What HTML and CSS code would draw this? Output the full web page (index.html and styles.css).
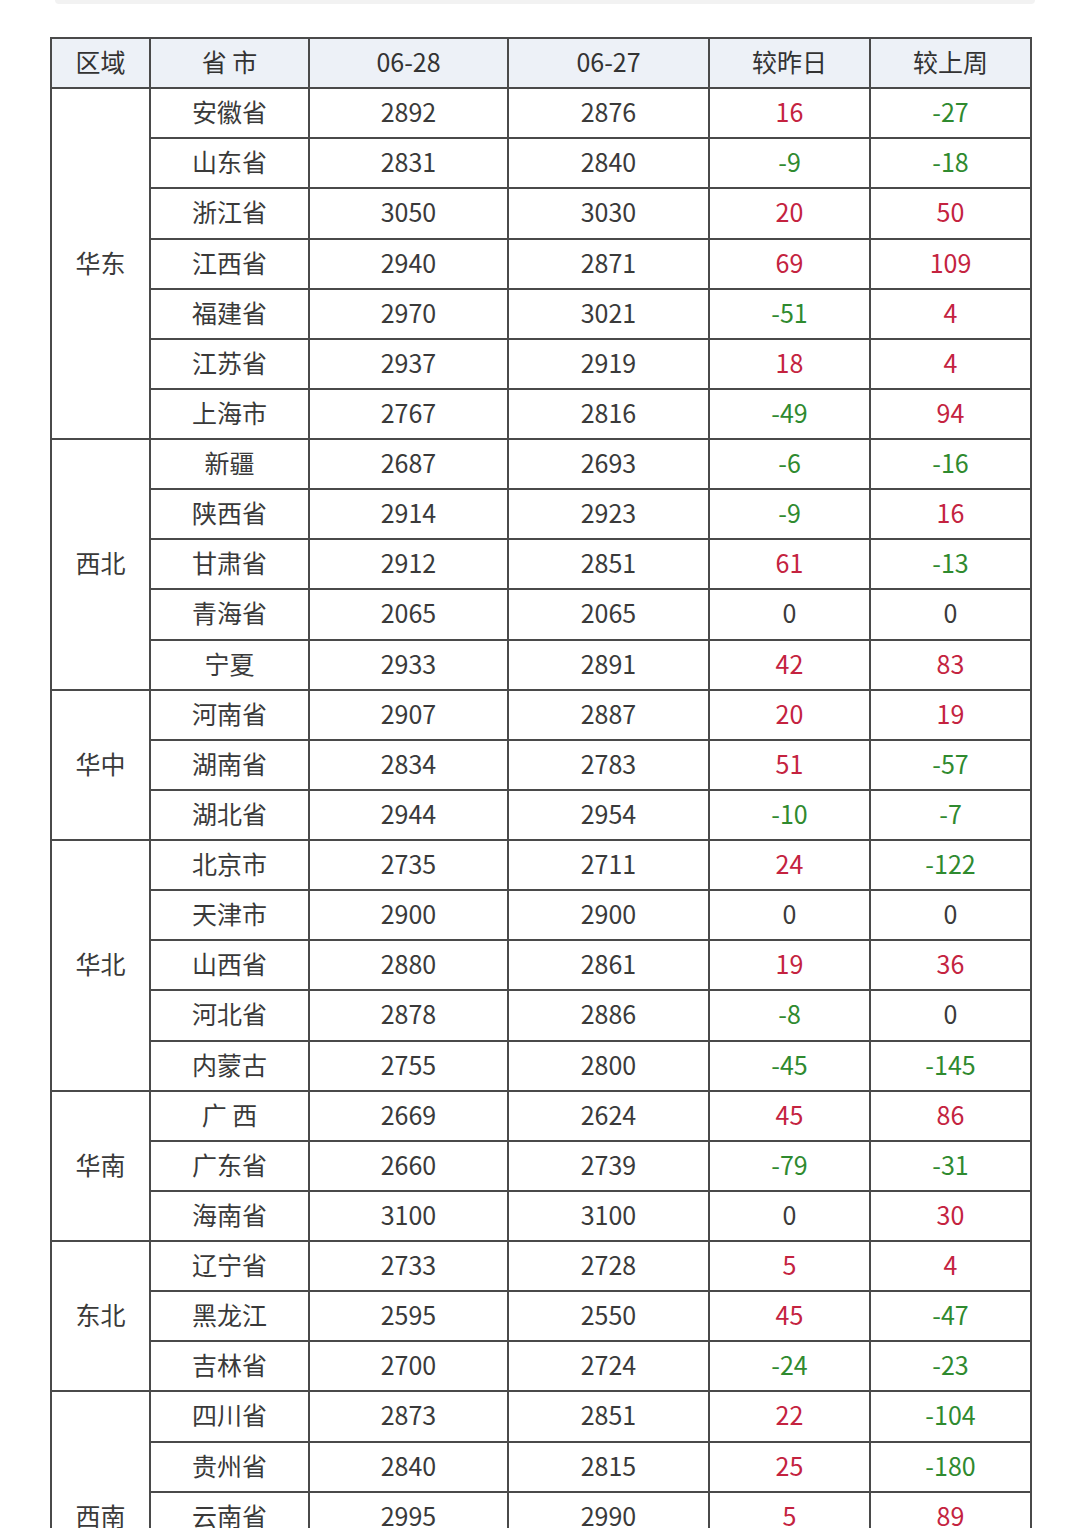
FILE: index.html
```html
<!DOCTYPE html>
<html lang="zh">
<head>
<meta charset="utf-8">
<link rel="stylesheet" href="styles.css">
</head>
<body>
<div class="card-edge"></div>
<table class="price">
  <colgroup>
    <col class="c1"><col class="c2"><col class="c3"><col class="c4"><col class="c5"><col class="c6">
  </colgroup>
  <thead>
    <tr><th>区域</th><th>省&nbsp;市</th><th>06-28</th><th>06-27</th><th>较昨日</th><th>较上周</th></tr>
  </thead>
  <tbody>
    <tr><td class="region" rowspan="7">华东</td><td>安徽省</td><td>2892</td><td>2876</td><td class="up">16</td><td class="down">-27</td></tr>
    <tr><td>山东省</td><td>2831</td><td>2840</td><td class="down">-9</td><td class="down">-18</td></tr>
    <tr><td>浙江省</td><td>3050</td><td>3030</td><td class="up">20</td><td class="up">50</td></tr>
    <tr><td>江西省</td><td>2940</td><td>2871</td><td class="up">69</td><td class="up">109</td></tr>
    <tr><td>福建省</td><td>2970</td><td>3021</td><td class="down">-51</td><td class="up">4</td></tr>
    <tr><td>江苏省</td><td>2937</td><td>2919</td><td class="up">18</td><td class="up">4</td></tr>
    <tr><td>上海市</td><td>2767</td><td>2816</td><td class="down">-49</td><td class="up">94</td></tr>

    <tr><td class="region" rowspan="5">西北</td><td>新疆</td><td>2687</td><td>2693</td><td class="down">-6</td><td class="down">-16</td></tr>
    <tr><td>陕西省</td><td>2914</td><td>2923</td><td class="down">-9</td><td class="up">16</td></tr>
    <tr><td>甘肃省</td><td>2912</td><td>2851</td><td class="up">61</td><td class="down">-13</td></tr>
    <tr><td>青海省</td><td>2065</td><td>2065</td><td>0</td><td>0</td></tr>
    <tr><td>宁夏</td><td>2933</td><td>2891</td><td class="up">42</td><td class="up">83</td></tr>

    <tr><td class="region" rowspan="3">华中</td><td>河南省</td><td>2907</td><td>2887</td><td class="up">20</td><td class="up">19</td></tr>
    <tr><td>湖南省</td><td>2834</td><td>2783</td><td class="up">51</td><td class="down">-57</td></tr>
    <tr><td>湖北省</td><td>2944</td><td>2954</td><td class="down">-10</td><td class="down">-7</td></tr>

    <tr><td class="region" rowspan="5">华北</td><td>北京市</td><td>2735</td><td>2711</td><td class="up">24</td><td class="down">-122</td></tr>
    <tr><td>天津市</td><td>2900</td><td>2900</td><td>0</td><td>0</td></tr>
    <tr><td>山西省</td><td>2880</td><td>2861</td><td class="up">19</td><td class="up">36</td></tr>
    <tr><td>河北省</td><td>2878</td><td>2886</td><td class="down">-8</td><td>0</td></tr>
    <tr><td>内蒙古</td><td>2755</td><td>2800</td><td class="down">-45</td><td class="down">-145</td></tr>

    <tr><td class="region" rowspan="3">华南</td><td>广&nbsp;西</td><td>2669</td><td>2624</td><td class="up">45</td><td class="up">86</td></tr>
    <tr><td>广东省</td><td>2660</td><td>2739</td><td class="down">-79</td><td class="down">-31</td></tr>
    <tr><td>海南省</td><td>3100</td><td>3100</td><td>0</td><td class="up">30</td></tr>

    <tr><td class="region" rowspan="3">东北</td><td>辽宁省</td><td>2733</td><td>2728</td><td class="up">5</td><td class="up">4</td></tr>
    <tr><td>黑龙江</td><td>2595</td><td>2550</td><td class="up">45</td><td class="down">-47</td></tr>
    <tr><td>吉林省</td><td>2700</td><td>2724</td><td class="down">-24</td><td class="down">-23</td></tr>

    <tr><td class="region" rowspan="5">西南</td><td>四川省</td><td>2873</td><td>2851</td><td class="up">22</td><td class="down">-104</td></tr>
    <tr><td>贵州省</td><td>2840</td><td>2815</td><td class="up">25</td><td class="down">-180</td></tr>
    <tr><td>云南省</td><td>2995</td><td>2990</td><td class="up">5</td><td class="up">89</td></tr>
    <tr><td>重庆市</td><td>2890</td><td>2880</td><td class="up">10</td><td class="up">12</td></tr>
    <tr><td>西藏</td><td>2950</td><td>2950</td><td>0</td><td>0</td></tr>
  </tbody>
</table>
</body>
</html>
```

FILE: styles.css
```css
html, body {
  margin: 0;
  padding: 0;
  background: #ffffff;
}

body {
  font-family: "Noto Sans CJK SC", "Liberation Sans", sans-serif;
  color: #333333;
  overflow: hidden;
  height: 1528px;
}

.card-edge {
  margin: 0 45px 0 55px;
  height: 4px;
  background: #f2f2f2;
  border-radius: 0 0 10px 10px;
}

.price {
  margin: 33px 0 0 50px;
  border-collapse: collapse;
  table-layout: fixed;
  width: 981px;
  font-size: 25px;
}

.c1 { width: 99px; }
.c2 { width: 159px; }
.c3 { width: 199px; }
.c4 { width: 201px; }
.c5 { width: 161px; }
.c6 { width: 161px; }

.price th,
.price td {
  border: 2px solid #4a4a4a;
  height: 50.14px;
  padding: 0 0 3px 0;
  box-sizing: border-box;
  text-align: center;
  vertical-align: middle;
  font-weight: normal;
  line-height: 1;
  white-space: nowrap;
}

.price thead th {
  background: #edf1f7;
  color: #333333;
}

.price td {
  color: #3a3a3a;
}

.price td.up {
  color: #c4233f;
}

.price td.down {
  color: #2f8a2f;
}
```
